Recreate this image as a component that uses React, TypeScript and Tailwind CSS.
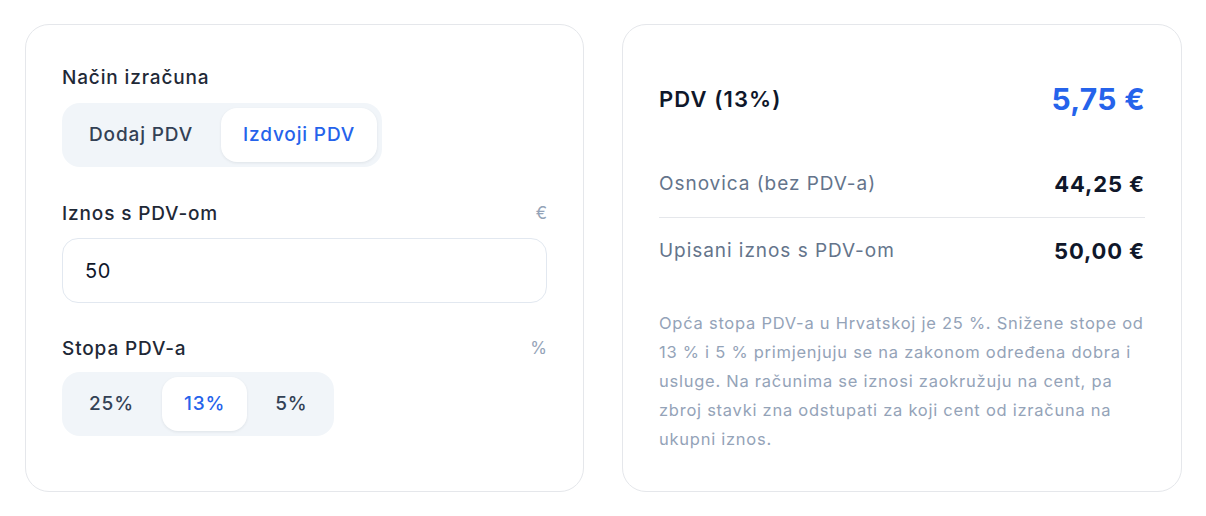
import { useState } from 'react';

const font = { fontFamily: 'Inter, "Noto Sans", sans-serif' };

function Segmented({
  options,
  value,
  onChange,
}: {
  options: string[];
  value: string;
  onChange: (v: string) => void;
}) {
  return (
    <div className="inline-flex gap-[6px] rounded-[18px] bg-[#f1f5f9] p-[5px]">
      {options.map((o) => (
        <button
          key={o}
          onClick={() => onChange(o)}
          className={`h-[54px] rounded-[16px] px-[22px] text-[19px] font-medium tracking-[0.045em] ${
            value === o
              ? 'bg-white text-[#2563eb] shadow-[0_1px_3px_rgba(15,23,42,0.08)]'
              : 'text-[#334155]'
          }`}
        >
          {o}
        </button>
      ))}
    </div>
  );
}

export default function App() {
  const [mode, setMode] = useState('Izdvoji PDV');
  const [rate, setRate] = useState('13%');
  const [amount, setAmount] = useState('50');

  const label = 'text-[19px] font-medium leading-[28px] tracking-[0.045em] text-[#1f2937]';

  return (
    <div className="flex h-[516px] w-[1206px] gap-[38px] bg-white pl-[25px] pt-[24px]" style={font}>
      {/* Inputs */}
      <div className="flex h-[468px] w-[559px] flex-col rounded-[24px] border border-[#e5e7eb] px-[36px] pt-[39px]">
        <div className={label}>Način izračuna</div>
        <div className="mt-[11px]">
          <Segmented options={['Dodaj PDV', 'Izdvoji PDV']} value={mode} onChange={setMode} />
        </div>

        <div className="mt-[33px] flex items-center justify-between">
          <span className={label}>Iznos s PDV-om</span>
          <span className="text-[17px] text-[#94a3b8]">€</span>
        </div>
        <input
          value={amount}
          onChange={(e) => setAmount(e.target.value)}
          className="mt-[10px] h-[65px] w-full rounded-[16px] border border-[#e2e8f0] px-[22px] text-[20px] tracking-[0.03em] text-[#0f172a] outline-none"
        />

        <div className="mt-[32px] flex items-center justify-between">
          <span className={label}>Stopa PDV-a</span>
          <span className="text-[17px] text-[#94a3b8]">%</span>
        </div>
        <div className="mt-[9px]">
          <Segmented options={['25%', '13%', '5%']} value={rate} onChange={setRate} />
        </div>
      </div>

      {/* Results */}
      <div className="flex h-[468px] w-[560px] flex-col rounded-[24px] border border-[#e5e7eb] px-[36px] pt-[52px]">
        <div className="flex items-center justify-between">
          <span className="text-[22px] font-semibold tracking-[0.05em] text-[#0f172a]">PDV (13%)</span>
          <span className="text-[30px] font-bold tracking-[0.01em] text-[#2563eb]">5,75 €</span>
        </div>

        <div className="mt-[46px] flex items-center justify-between border-b border-[#e5e7eb] pb-[16px]">
          <span className="text-[19px] tracking-[0.05em] text-[#64748b]">Osnovica (bez PDV-a)</span>
          <span className="text-[22px] font-bold tracking-[0.04em] text-[#0f172a]">44,25 €</span>
        </div>
        <div className="flex items-center justify-between pt-[17px]">
          <span className="text-[19px] tracking-[0.05em] text-[#64748b]">Upisani iznos s PDV-om</span>
          <span className="text-[22px] font-bold tracking-[0.04em] text-[#0f172a]">50,00 €</span>
        </div>

        <p className="mt-[41px] text-[16.5px] leading-[29px] tracking-[0.045em] text-[#94a3b8]">
          Opća stopa PDV-a u Hrvatskoj je 25 %. Snižene stope od 13 % i 5 % primjenjuju se na zakonom
          određena dobra i usluge. Na računima se iznosi zaokružuju na cent, pa zbroj stavki zna
          odstupati za koji cent od izračuna na ukupni iznos.
        </p>
      </div>
    </div>
  );
}
